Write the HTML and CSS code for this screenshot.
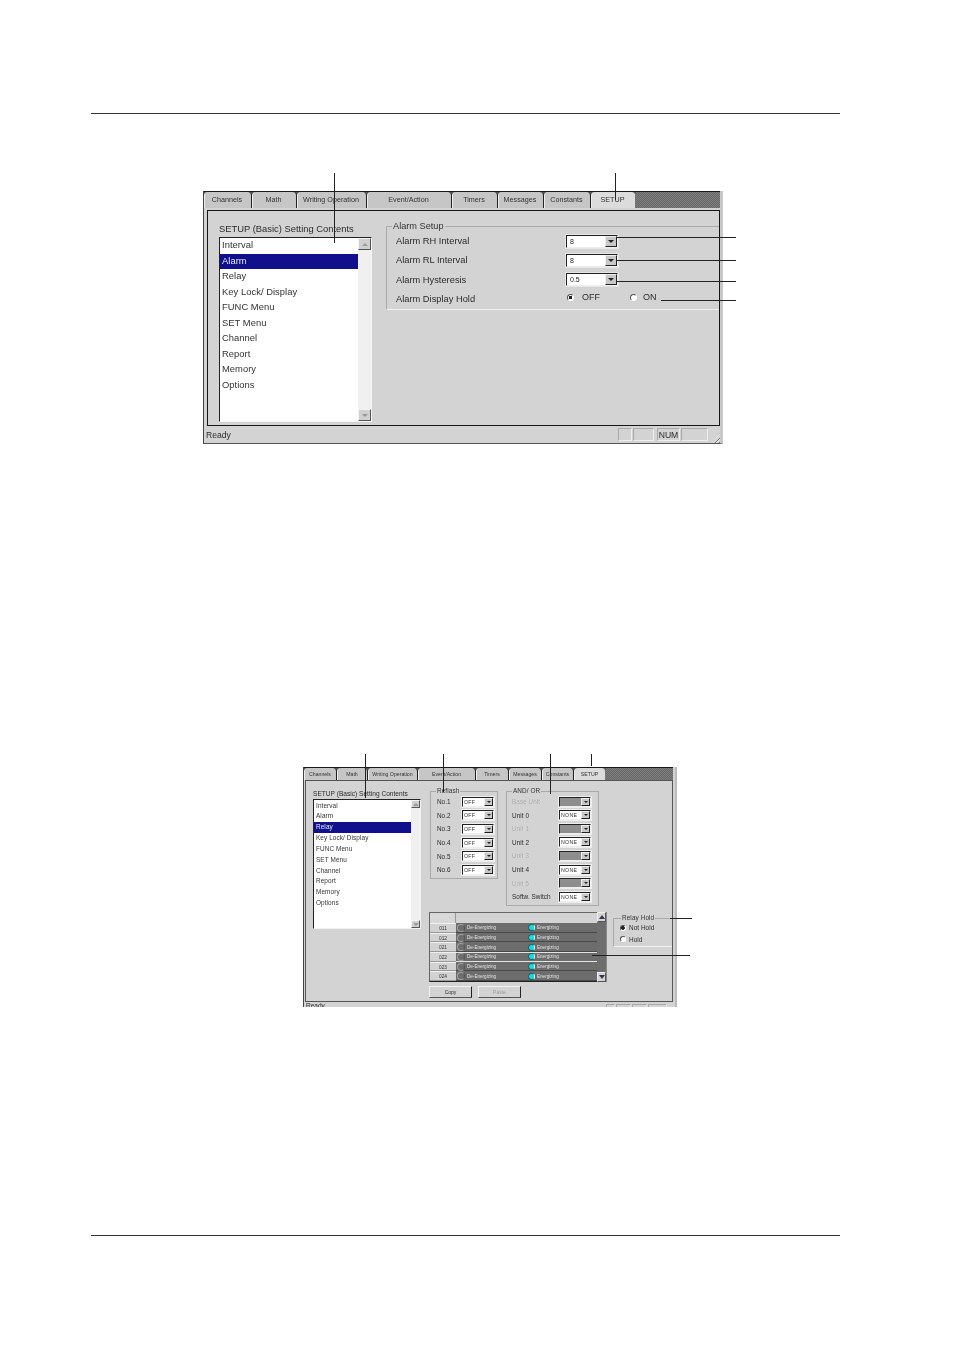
FILE: index.html
```html
<!DOCTYPE html>
<html lang="en">
<head>
<meta charset="utf-8">
<title>Setup screens</title>
<link rel="stylesheet" href="styles.css">
</head>
<body>
<main class="page">
  <hr class="rule rule-top">

  <section class="win win-a">
    <div class="tabs">
      <span class="tab w1">Channels</span><span class="tab w2">Math</span><span class="tab w3">Writing Operation</span><span class="tab w4">Event/Action</span><span class="tab w5">Timers</span><span class="tab w6">Messages</span><span class="tab w7">Constants</span><span class="tab w8 active">SETUP</span><span class="filler"></span>
    </div>
    <div class="panel">
      <div class="col-list">
        <div class="caption">SETUP (Basic) Setting Contents</div>
        <div class="listbox">
          <ul class="items">
            <li>Interval</li><li class="sel">Alarm</li><li>Relay</li><li>Key Lock/ Display</li><li>FUNC Menu</li><li>SET Menu</li><li>Channel</li><li>Report</li><li>Memory</li><li>Options</li>
          </ul>
          <div class="scroll"><span class="sbtn up"></span><span class="sbtn down"></span></div>
        </div>
      </div>
      <fieldset class="group alarm">
        <legend>Alarm Setup</legend>
        <div class="row"><span class="lab">Alarm RH Interval</span><span class="combo"><span class="val">8</span><span class="arrow"></span></span></div>
        <div class="row"><span class="lab">Alarm RL Interval</span><span class="combo"><span class="val">8</span><span class="arrow"></span></span></div>
        <div class="row"><span class="lab">Alarm Hysteresis</span><span class="combo"><span class="val">0.5</span><span class="arrow"></span></span></div>
        <div class="row"><span class="lab">Alarm Display Hold</span><span class="radios"><span class="radio on"></span><span class="rtext off">OFF</span><span class="radio"></span><span class="rtext">ON</span></span></div>
      </fieldset>
    </div>
    <footer class="status">
      <span class="ready">Ready</span>
      <span class="cell c1"></span><span class="cell c2"></span><span class="cell c3">NUM</span><span class="cell c4"></span><span class="grip"></span>
    </footer>
  </section>

  <section class="win win-b">
    <div class="tabs">
      <span class="tab w1">Channels</span><span class="tab w2">Math</span><span class="tab w3">Writing Operation</span><span class="tab w4">Event/Action</span><span class="tab w5">Timers</span><span class="tab w6">Messages</span><span class="tab w7">Constants</span><span class="tab w8 active">SETUP</span><span class="filler"></span>
    </div>
    <div class="panel">
      <div class="col-list">
        <div class="caption">SETUP (Basic) Setting Contents</div>
        <div class="listbox">
          <ul class="items">
            <li>Interval</li><li>Alarm</li><li class="sel">Relay</li><li>Key Lock/ Display</li><li>FUNC Menu</li><li>SET Menu</li><li>Channel</li><li>Report</li><li>Memory</li><li>Options</li>
          </ul>
          <div class="scroll"><span class="sbtn up"></span><span class="sbtn down"></span></div>
        </div>
      </div>
      <div class="col-main">
        <div class="top-groups">
          <fieldset class="group refresh">
            <legend>Reflash</legend>
            <div class="row"><span class="lab">No.1</span><span class="combo"><span class="val">OFF</span><span class="arrow"></span></span></div>
            <div class="row"><span class="lab">No.2</span><span class="combo"><span class="val">OFF</span><span class="arrow"></span></span></div>
            <div class="row"><span class="lab">No.3</span><span class="combo"><span class="val">OFF</span><span class="arrow"></span></span></div>
            <div class="row"><span class="lab">No.4</span><span class="combo"><span class="val">OFF</span><span class="arrow"></span></span></div>
            <div class="row"><span class="lab">No.5</span><span class="combo"><span class="val">OFF</span><span class="arrow"></span></span></div>
            <div class="row"><span class="lab">No.6</span><span class="combo"><span class="val">OFF</span><span class="arrow"></span></span></div>
          </fieldset>
          <fieldset class="group andor">
            <legend>AND/ OR</legend>
            <div class="row dis"><span class="lab">Base Unit</span><span class="combo"><span class="val"></span><span class="arrow"></span></span></div>
            <div class="row"><span class="lab">Unit 0</span><span class="combo"><span class="val">NONE</span><span class="arrow"></span></span></div>
            <div class="row dis"><span class="lab">Unit 1</span><span class="combo"><span class="val"></span><span class="arrow"></span></span></div>
            <div class="row"><span class="lab">Unit 2</span><span class="combo"><span class="val">NONE</span><span class="arrow"></span></span></div>
            <div class="row dis"><span class="lab">Unit 3</span><span class="combo"><span class="val"></span><span class="arrow"></span></span></div>
            <div class="row"><span class="lab">Unit 4</span><span class="combo"><span class="val">NONE</span><span class="arrow"></span></span></div>
            <div class="row dis"><span class="lab">Unit 5</span><span class="combo"><span class="val"></span><span class="arrow"></span></span></div>
            <div class="row"><span class="lab">Softw. Switch</span><span class="combo"><span class="val">NONE</span><span class="arrow"></span></span></div>
          </fieldset>
        </div>
        <div class="lower">
          <div class="table-col">
            <div class="grid-wrap">
              <div class="grid">
                <div class="ghead"><span class="gcorner"></span><span class="gtop"></span></div>
                <div class="grow"><span class="rh">011</span><span class="gd"><span class="led"></span><span class="t1">De-Energizing</span><span class="led lit"></span><span>Energizing</span></span></div>
                <div class="grow"><span class="rh">012</span><span class="gd"><span class="led"></span><span class="t1">De-Energizing</span><span class="led lit"></span><span>Energizing</span></span></div>
                <div class="grow"><span class="rh">021</span><span class="gd"><span class="led"></span><span class="t1">De-Energizing</span><span class="led lit"></span><span>Energizing</span></span></div>
                <div class="grow cur"><span class="rh">022</span><span class="gd"><span class="led"></span><span class="t1">De-Energizing</span><span class="led lit"></span><span>Energizing</span></span></div>
                <div class="grow"><span class="rh">023</span><span class="gd"><span class="led"></span><span class="t1">De-Energizing</span><span class="led lit"></span><span>Energizing</span></span></div>
                <div class="grow"><span class="rh">024</span><span class="gd"><span class="led"></span><span class="t1">De-Energizing</span><span class="led lit"></span><span>Energizing</span></span></div>
              </div>
              <div class="gscroll"><span class="gbtn gup"></span><span class="gbtn gdown"></span></div>
            </div>
            <div class="buttons"><span class="btn">Copy</span><span class="btn dim">Paste</span></div>
          </div>
          <fieldset class="group hold">
            <legend>Relay Hold</legend>
            <div class="hrow"><span class="radio on"></span><span>Not Hold</span></div>
            <div class="hrow"><span class="radio"></span><span>Hold</span></div>
          </fieldset>
        </div>
      </div>
    </div>
    <footer class="status">
      <span class="ready">Ready</span>
      <span class="cell c1"></span><span class="cell c2"></span><span class="cell c3">NUM</span><span class="cell c4"></span>
    </footer>
  </section>

  <hr class="rule rule-bottom">

  <i class="lead v a1"></i><i class="lead v a2"></i>
  <i class="lead h a3"></i><i class="lead h a4"></i><i class="lead h a5"></i><i class="lead h a6"></i>
  <i class="lead v b1"></i><i class="lead v b2"></i><i class="lead v b3"></i><i class="lead v b4"></i>
  <i class="lead h b5"></i><i class="lead h b6"></i>
</main>
</body>
</html>
```
FILE: styles.css
```css
* { box-sizing: border-box; }
html, body { margin: 0; padding: 0; background: #fff; }
.page { position: relative; width: 954px; height: 1350px; overflow: hidden; font-family: "Liberation Sans", Arial, sans-serif; color: #2b2b2b; display: flow-root; }

.rule { border: 0; height: 1px; background: #333; width: 749px; margin: 0 0 0 91px; }
.rule-top { margin-top: 113px; }
.rule-bottom { margin-top: 228px; }

/* Window */
.win { display: flex; flex-direction: column; background: #d3d3d3; border-left: 1px solid #444; overflow: hidden; filter: blur(.3px); }
.win-a { width: 520px; height: 253px; margin: 77px 0 0 203px; border-right: 3px solid #c9c9c9; border-bottom: 1px solid #555; }
.win-b { width: 374px; height: 240px; margin: 323px 0 0 303px; border-right: 2px solid #bbb; }

/* Tabs */
.tabs { display: flex; background: #555; border-top: 1px solid #1a1a1a; flex: none; }
.win-a .tabs { height: 17px; }
.win-b .tabs { height: 13px; margin-right: 2px; }
.tab { display: flex; align-items: center; justify-content: center; background: #c6c6c6; border-left: 1px solid #eee; border-right: 1px solid #222; border-radius: 4px 4px 0 0; white-space: nowrap; flex: none; color: #333; }
.tab.active { background: #dcdcdc; border-right-color: #777; }
.filler { flex: 1; background: repeating-conic-gradient(#686868 0 25%, #7e7e7e 0 50%) 0 0 / 2px 2px; }

.win-a .tab { font-size: 7.2px; padding: 0 2px 2px 0; }
.win-a .w1 { width: 48px; } .win-a .w2 { width: 45px; } .win-a .w3 { width: 70px; } .win-a .w4 { width: 85px; }
.win-a .w5 { width: 46px; } .win-a .w6 { width: 46px; } .win-a .w7 { width: 47px; } .win-a .w8 { width: 45px; }
.win-b .tab { font-size: 5.2px; padding: 0 1px 1px 0; }
.win-b .w1 { width: 33px; } .win-b .w2 { width: 31px; } .win-b .w3 { width: 50px; } .win-b .w4 { width: 58px; }
.win-b .w5 { width: 33px; } .win-b .w6 { width: 33px; } .win-b .w7 { width: 32px; } .win-b .w8 { width: 32px; }

/* Panel */
.panel { display: flex; flex: none; border: 1px solid #161616; background: #d3d3d3; }
.win-a .panel { width: 513px; height: 216px; margin: 2px 0 0 3px; padding: 10px 0 0 11px; gap: 14px; }
.win-b .panel { width: 368px; height: 222px; margin: 0 0 0 1px; border-color: #555; padding: 6px 0 0 7px; gap: 8px; }

.caption { white-space: nowrap; }
.win-a .caption { font-size: 9.4px; line-height: 12px; margin-top: 2px; }
.win-a .col-list { width: 153px; flex: none; }
.win-b .caption { font-size: 6.6px; line-height: 9px; margin-top: 2px; }
.win-b .col-list { width: 108px; flex: none; }

/* Listbox */
.listbox { display: flex; border-left: 1px solid #222; border-top: 1px solid #222; border-right: 1px solid #f4f4f4; border-bottom: 1px solid #f4f4f4; }
.win-a .listbox { height: 185px; margin-top: 2px; }
.win-b .listbox { height: 130px; margin-top: 1px; }
.items { list-style: none; margin: 0; padding: 0; flex: 1; background: #fff; }
.items li { white-space: nowrap; color: #333; }
.items .sel { background: #10108c; color: #e8e8f4; }
.win-a .items li { height: 15.5px; line-height: 14.5px; padding-left: 2px; font-size: 9.4px; letter-spacing: .04px; }
.win-b .items { padding-top: .5px; }
.win-b .items li { height: 10.85px; line-height: 10.85px; padding-left: 2px; font-size: 6.4px; letter-spacing: .1px; }
.scroll { display: flex; flex-direction: column; justify-content: space-between; background: #f0f0f0; flex: none; }
.win-a .scroll { width: 13px; }
.win-b .scroll { width: 9px; }
.sbtn { display: flex; align-items: center; justify-content: center; background: #d0d0d0; border: 1px solid; border-color: #f4f4f4 #555 #555 #f4f4f4; }
.win-a .sbtn { height: 12px; }
.win-b .sbtn { height: 8px; }
.sbtn::before { content: ""; border-left: 3px solid transparent; border-right: 3px solid transparent; }
.sbtn.up::before { border-bottom: 3px solid #999; }
.sbtn.down::before { border-top: 3px solid #999; }

/* Group boxes */
.group { margin: 0; min-width: 0; border: 1px solid #aaa; padding: 0; }
.group legend { padding: 0 1px; color: #333; white-space: nowrap; }
.alarm { width: 333px; height: 89px; border-right: 0; border-color: #aaa #aaa #f0f0f0; }
.alarm legend { margin: 0 0 -.6px 5px; font-size: 9.2px; line-height: 11px; }
.alarm .row { display: flex; align-items: center; height: 19.3px; padding-left: 9px; }
.alarm .lab { width: 170px; font-size: 9.3px; white-space: nowrap; }

/* Combo */
.combo { display: flex; border: 1px solid; border-color: #222 #eee #eee #222; flex: none; outline: 1px solid #e6e6e6; }
.val { flex: 1; display: flex; align-items: center; background: #fff; color: #222; }
.arrow { display: flex; align-items: center; justify-content: center; background: #c8c8c8; border: 1px solid; border-color: #eee #222 #222 #eee; flex: none; }
.arrow::before { content: ""; border-left: 3px solid transparent; border-right: 3px solid transparent; border-top: 3px solid #222; }
.alarm .combo { width: 52px; height: 13px; }
.alarm .val { font-size: 7px; padding-left: 3px; }
.alarm .arrow { width: 12px; }

.radios { display: flex; align-items: center; margin: -3px 0 0 1px; }
.radio { width: 7px; height: 7px; border-radius: 50%; border: 1px solid; border-color: #555 #fff #fff #555; background: #fff; flex: none; }
.radio.on { background: radial-gradient(circle, #222 0 1.6px, #fff 1.9px); }
.rtext { font-size: 9px; margin-left: 6px; }
.rtext.off { width: 48px; margin-left: 8px; }

/* Second window */
.col-main { display: flex; flex-direction: column; flex: none; width: 243px; }
.top-groups { display: flex; gap: 8px; margin-left: 1px; }
.refresh { width: 68px; height: 92px; border-color: #aaa; }
.andor { width: 93px; height: 119px; border-color: #aaa; }
.refresh legend, .andor legend, .hold legend { font-size: 6.4px; line-height: 8px; margin-left: 5px; letter-spacing: .1px; }
.refresh .row, .andor .row { display: flex; align-items: center; justify-content: space-between; font-size: 6.4px; }
.refresh .row { height: 13.6px; padding: 0 3px 0 6px; }
.andor .row { height: 13.55px; padding: 0 7px 0 5px; letter-spacing: .05px; }
.refresh .combo, .andor .combo { height: 10px; width: 32px; outline-color: #eee; }
.refresh .val, .andor .val { font-size: 5.2px; padding-left: 1px; letter-spacing: .3px; color: #333; }
.refresh .arrow, .andor .arrow { width: 9px; }
.refresh .arrow::before, .andor .arrow::before { border-width: 2px 2px 0; }
.dis .lab { color: #a3a3a3; text-shadow: .4px .4px 0 #ececec; }
.dis .val { background: #8e8e8e; }

.lower { display: flex; gap: 6px; margin-top: 6px; }
.table-col { width: 178px; flex: none; }
.grid-wrap { display: flex; height: 70px; }
.grid { flex: 1; display: flex; flex-direction: column; background: #cfcfcf; border-left: 1px solid #666; border-top: 1px solid #666; border-bottom: 1px solid #222; }
.ghead { display: flex; height: 10px; flex: none; }
.gcorner { width: 26px; background: #d8d8d8; border-right: 1px solid #999; }
.gtop { flex: 1; background: #d3d3d3; }
.grow { display: flex; height: 9.7px; flex: none; }
.rh { width: 26px; background: #d2d2d2; border-top: 1px solid #f0f0f0; border-bottom: 1px solid #999; font-size: 4.8px; line-height: 9px; text-align: center; color: #333; }
.gd { flex: 1; display: flex; align-items: center; background: #6d6d6d; color: #e2e2e2; font-size: 4.6px; padding: 1px 0 0 1px; border-bottom: 1px solid #4a4a4a; white-space: nowrap; }
.grow.cur .gd { border-top: 1px solid #e4e4e4; border-bottom: 1px solid #e4e4e4; padding-top: 0; }
.t1 { width: 61px; margin-left: 2px; }
.led { width: 8px; height: 8px; border-radius: 50%; border: 1px solid #a0a0a0; border-right-color: #555; flex: none; }
.led.lit { background: #18d8d8; border: 1px solid #0b6f78; border-right-color: #f0f0f0; margin-right: 2px; width: 7px; height: 7px; }
.gscroll { width: 10px; flex: none; display: flex; flex-direction: column; justify-content: space-between; background: #6e6e6e; border-right: 1px solid #888; }
.gbtn { height: 10px; background: #d4d4d4; border: 1px solid; border-color: #eee #555 #555 #eee; display: flex; align-items: center; justify-content: center; }
.gbtn::before { content: ""; border-left: 3px solid transparent; border-right: 3px solid transparent; }
.gup::before { border-bottom: 4px solid #335; }
.gdown::before { border-top: 4px solid #335; }
.buttons { display: flex; gap: 6px; margin-top: 4px; }
.btn { width: 43px; height: 12px; display: flex; align-items: center; justify-content: center; font-size: 5px; background: #d3d3d3; border: 1px solid; border-color: #f2f2f2 #222 #555 #f2f2f2; }
.btn.dim { color: #999; }
.hold { width: 59px; height: 33px; margin-top: 2px; border-right: 0; border-color: #aaa #aaa #f2f2f2; }
.hold legend { margin-left: 7px; }
.hrow { display: flex; align-items: center; gap: 3px; height: 11.5px; padding-left: 6px; font-size: 6.4px; letter-spacing: .05px; }
.hrow .radio { width: 6px; height: 6px; }

/* Status */
.status { display: flex; align-items: center; flex: 1; min-height: 0; }
.ready { white-space: nowrap; }
.win-a .status { padding-left: 2px; font-size: 8.6px; }
.win-b .status { padding-left: 2px; font-size: 6.5px; align-items: flex-start; }
.cell { border: 1px solid; border-color: #aaa #eee #eee #aaa; display: flex; align-items: center; justify-content: center; flex: none; }
.win-a .cell { height: 13px; font-size: 8.6px; }
.win-a .c1 { width: 14px; margin-left: auto; }
.win-a .c2 { width: 21px; margin-left: 1px; }
.win-a .c3 { width: 23px; margin-left: 3px; }
.win-a .c4 { width: 27px; margin-left: 1px; }
.win-b .cell { height: 10px; font-size: 5.6px; margin-top: 2px; }
.win-b .c1 { width: 9px; margin-left: auto; }
.win-b .c2 { width: 15px; margin-left: 1px; }
.win-b .c3 { width: 15px; margin-left: 1px; }
.win-b .c4 { width: 19px; margin-left: 1px; margin-right: 8px; }
.grip { width: 8px; height: 10px; margin-left: 4px; align-self: flex-end; background: repeating-linear-gradient(135deg, transparent 0 1.5px, #777 1.5px 2.5px, #eee 2.5px 3.5px); clip-path: polygon(100% 0, 100% 100%, 0 100%); }

/* Leader lines */
.lead { position: absolute; background: #222; display: block; }
.lead.v { width: 1px; }
.lead.h { height: 1px; }
.a1 { left: 334px; top: 173px; height: 70px; }
.a2 { left: 615px; top: 173px; height: 27px; }
.a3 { left: 617px; top: 237px; width: 119px; }
.a4 { left: 617px; top: 260px; width: 119px; }
.a5 { left: 617px; top: 281px; width: 119px; }
.a6 { left: 661px; top: 300px; width: 75px; }
.b1 { left: 365px; top: 754px; height: 44px; }
.b2 { left: 443px; top: 754px; height: 38px; }
.b3 { left: 550px; top: 754px; height: 40px; }
.b4 { left: 591px; top: 754px; height: 12px; }
.b5 { left: 670px; top: 918px; width: 22px; }
.b6 { left: 592px; top: 955px; width: 98px; }
```
